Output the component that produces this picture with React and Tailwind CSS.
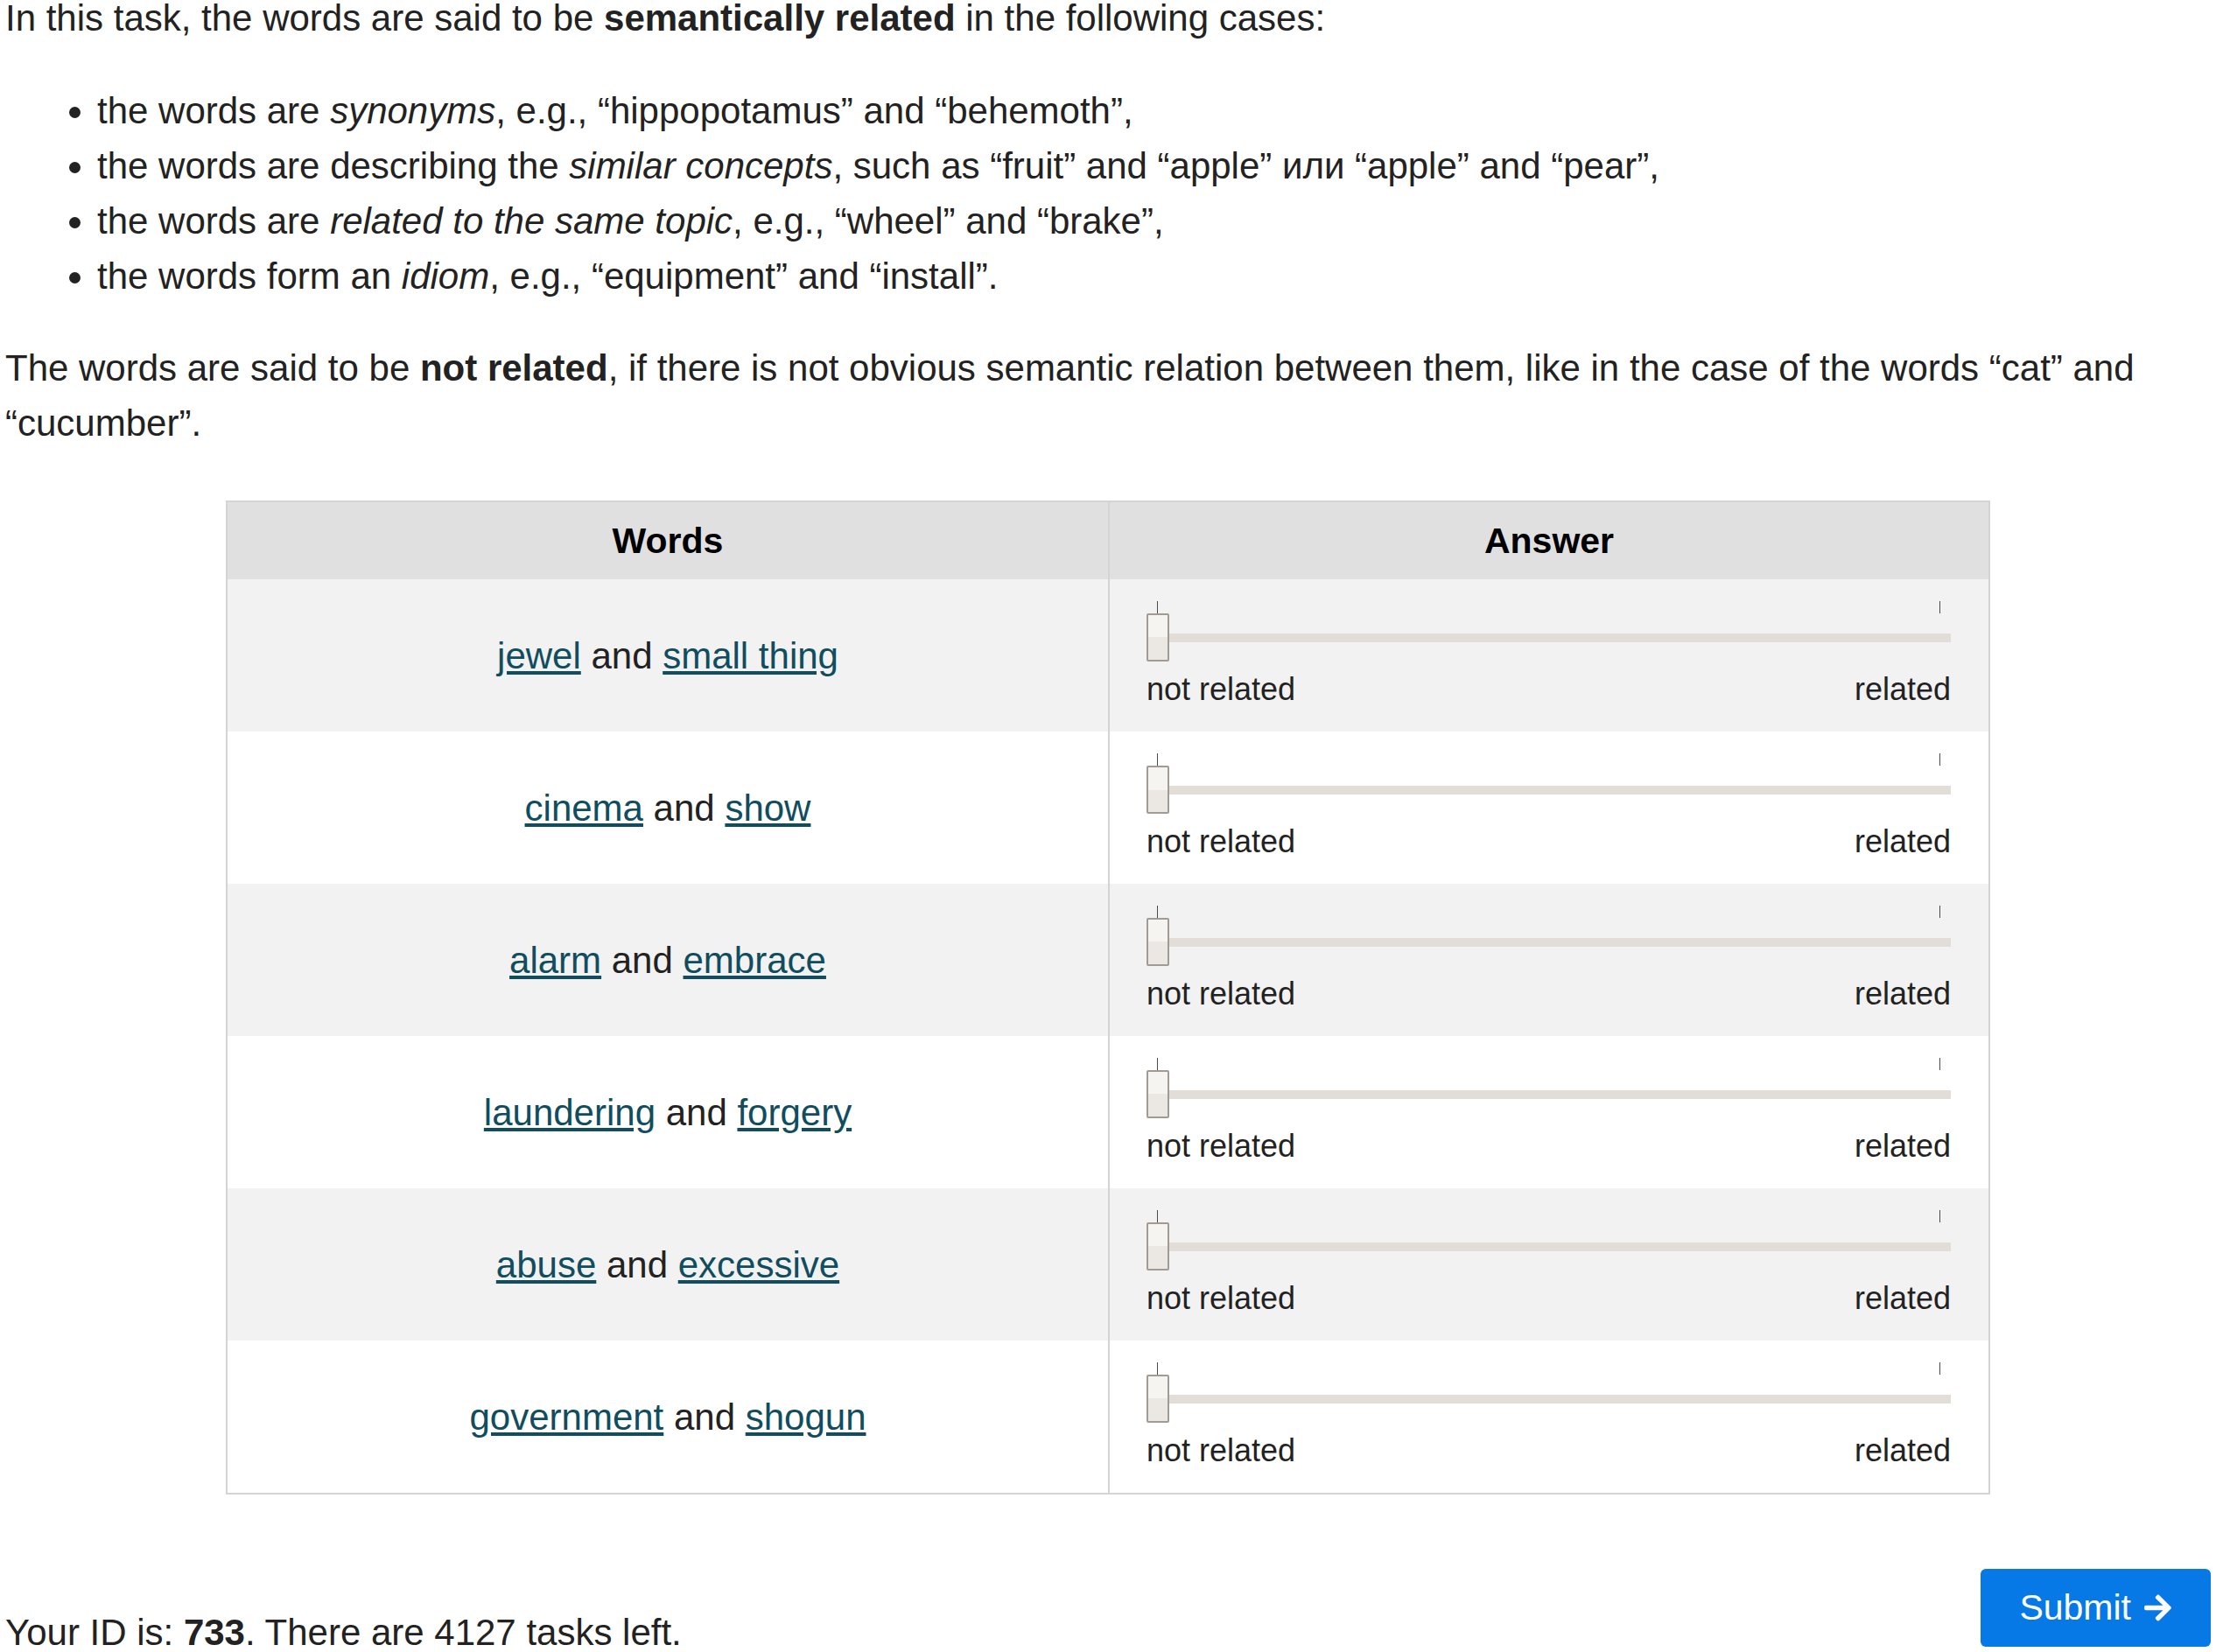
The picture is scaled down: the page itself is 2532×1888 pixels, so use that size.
import React from 'react';
import { FaArrowRight } from 'react-icons/fa';

const pairs = [
    ['jewel', 'small thing'],
    ['cinema', 'show'],
    ['alarm', 'embrace'],
    ['laundering', 'forgery'],
    ['abuse', 'excessive'],
    ['government', 'shogun'],
];

const Slider = () => (
    <div className="flex flex-col pl-[42px] pr-[43px] pt-[25px]">
        {/* tick marks for min / max */}
        <div className="flex justify-between px-[12px]">
            <div className="w-[1px] h-[14px] bg-[#4a4a4a]"></div>
            <div className="w-[1px] h-[14px] bg-[#4a4a4a]"></div>
        </div>
        <div className="relative h-[55px]">
            <div className="absolute left-0 right-0 top-[23px] h-[10px] bg-[#e2ddd7]"></div>
            <div className="absolute left-0 top-0 w-[26px] h-[55px] border-2 border-[#a19b93] rounded-[2px] bg-[linear-gradient(to_bottom,#f6f4f1_50%,#ebe7e2_50%)]"></div>
        </div>
        <div className="flex justify-between mt-[5px] text-[36px] leading-[54px] text-[#222]">
            <span>not related</span>
            <span>related</span>
        </div>
    </div>
);

const App = () => {
    return (
        <div className="min-h-screen bg-white pl-[6px] pr-[6px] font-['Liberation_Sans',Arial,sans-serif] text-[42px] leading-[63px] text-[#222]">
            <p className="mt-[-11px]">
                In this task, the words are said to be <strong>semantically related</strong> in the following cases:
            </p>

            <ul className="list-disc mt-[43px] pl-[105px]">
                <li>the words are <em>synonyms</em>, e.g., “hippopotamus” and “behemoth”,</li>
                <li>the words are describing the <em>similar concepts</em>, such as “fruit” and “apple” или “apple” and “pear”,</li>
                <li>the words are <em>related to the same topic</em>, e.g., “wheel” and “brake”,</li>
                <li>the words form an <em>idiom</em>, e.g., “equipment” and “install”.</li>
            </ul>

            <p className="mt-[42px]">
                The words are said to be <strong>not related</strong>, if there is not obvious semantic relation between them, like in the case of the words “cat” and “cucumber”.
            </p>

            {/* Words / Answer table */}
            <div className="w-[2016px] mx-auto mt-[57px] border-2 border-[#d4d4d4]">
                <div className="grid grid-cols-2 bg-[#e0e0e0] h-[88px] font-bold text-[41px] text-black">
                    <div className="flex items-center justify-center">Words</div>
                    <div className="flex items-center justify-center border-l-2 border-[#d4d4d4]">Answer</div>
                </div>
                {pairs.map(([a, b], i) => (
                    <div key={a} className={`grid grid-cols-2 h-[174px] ${i % 2 === 0 ? 'bg-[#f2f2f2]' : 'bg-white'}`}>
                        <div className="flex items-center justify-center">
                            <span>
                                <a href="#" className="text-[#0f4d5f] underline">{a}</a> and <a href="#" className="text-[#0f4d5f] underline">{b}</a>
                            </span>
                        </div>
                        <div className="border-l-2 border-[#d4d4d4]">
                            <Slider />
                        </div>
                    </div>
                ))}
            </div>

            {/* Footer */}
            <div className="flex justify-between items-start">
                <p className="mt-[126px]">
                    Your ID is: <strong>733</strong>. There are 4127 tasks left.
                </p>
                <button className="mt-[85px] h-[89px] pl-[44px] pr-[43px] rounded-[6px] bg-[#0679e6] text-white text-[41px] flex items-center gap-[13px]">
                    Submit <FaArrowRight className="w-[35px] h-[35px]" />
                </button>
            </div>
        </div>
    );
};

export default App;
